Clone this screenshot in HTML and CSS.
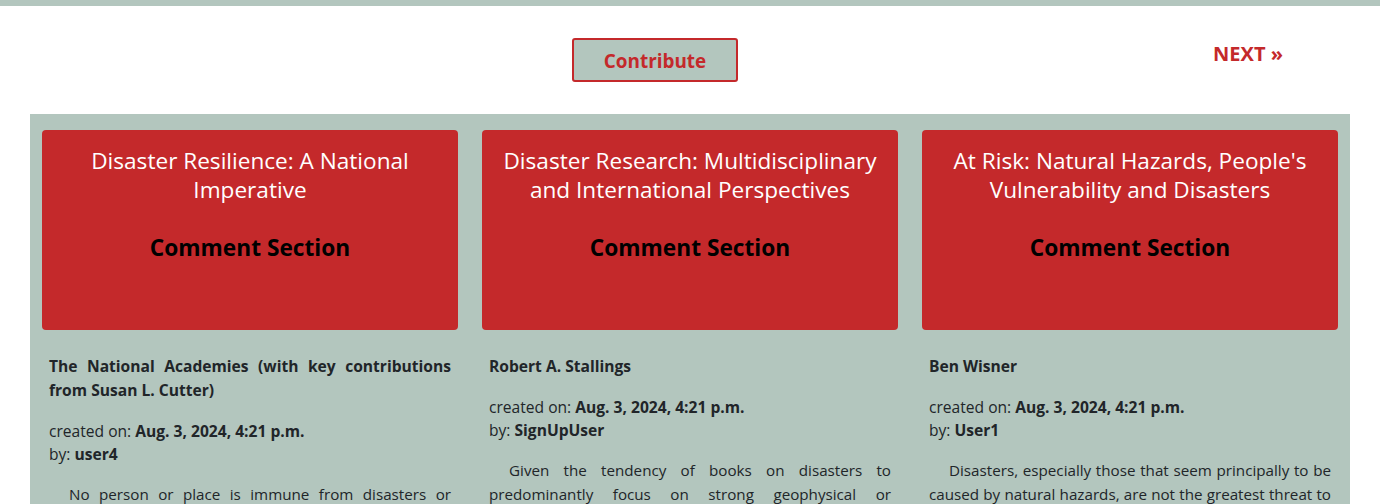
FILE: index.html
```html
<!DOCTYPE html>
<html>
<head>
<meta charset="utf-8">
<link rel="stylesheet" href="styles.css">
</head>
<body>
<div class="topbar"></div>
<div class="header">
  <a class="contribute" href="#">Contribute</a>
  <a class="next" href="#">NEXT &raquo;</a>
</div>
<div class="board">
  <div class="card">
    <div class="card-head">
      <h2 class="title">Disaster Resilience: A National Imperative</h2>
      <h3 class="comments">Comment Section</h3>
    </div>
    <div class="card-body">
      <p class="author">The National Academies (with key contributions from Susan L. Cutter)</p>
      <p class="meta">created on: <b>Aug. 3, 2024, 4:21 p.m.</b><br>by: <b>user4</b></p>
      <p class="text">No person or place is immune from disasters or disaster-related losses. Infectious disease outbreaks, acts of terrorism, social unrest, or financial disasters in addition to natural hazards can all lead to large-scale consequences for the nation and its communities.</p>
    </div>
  </div>
  <div class="card">
    <div class="card-head">
      <h2 class="title">Disaster Research: Multidisciplinary and International Perspectives</h2>
      <h3 class="comments">Comment Section</h3>
    </div>
    <div class="card-body">
      <p class="author">Robert A. Stallings</p>
      <p class="meta">created on: <b>Aug. 3, 2024, 4:21 p.m.</b><br>by: <b>SignUpUser</b></p>
      <p class="text">Given the tendency of books on disasters to predominantly focus on strong geophysical or technological events, this volume brings together research from a variety of disciplines and countries.</p>
    </div>
  </div>
  <div class="card">
    <div class="card-head">
      <h2 class="title">At Risk: Natural Hazards, People's Vulnerability and Disasters</h2>
      <h3 class="comments">Comment Section</h3>
    </div>
    <div class="card-body">
      <p class="author">Ben Wisner</p>
      <p class="meta">created on: <b>Aug. 3, 2024, 4:21 p.m.</b><br>by: <b>User1</b></p>
      <p class="text">Disasters, especially those that seem principally to be caused by natural hazards, are not the greatest threat to humanity, yet they remain a major obstacle to development in many parts of the world.</p>
    </div>
  </div>
</div>
</body>
</html>
```

FILE: styles.css
```css
* { box-sizing: border-box; }
html, body { margin: 0; padding: 0; }
body {
  font-family: "Open Sans", "Noto Sans", sans-serif;
  background: #ffffff;
  color: #212529;
  font-size: 15.6px;
  line-height: 1.5;
}
.topbar {
  height: 6px;
  background: #b3c6be;
}
.header {
  display: flex;
  align-items: center;
  height: 108px;
  padding: 0 97px 10px 572px;
}
.contribute {
  display: inline-flex;
  align-items: center;
  justify-content: center;
  width: 166px;
  height: 44px;
  margin-top: 9px;
  padding-top: 4px;
  border: 2px solid #c4292b;
  border-radius: 3px;
  background: #b3c6be;
  color: #c4292b;
  font-weight: 700;
  font-size: 18.9px;
  text-decoration: none;
}
.next {
  margin-left: auto;
  margin-bottom: 2px;
  color: #c4292b;
  font-weight: 700;
  font-size: 20px;
  text-decoration: none;
}
.board {
  margin: 0 30px;
  background: #b3c6be;
  padding: 16px 12px;
  display: grid;
  grid-template-columns: repeat(3, 1fr);
  gap: 24px;
  min-height: 400px;
}
.card-head {
  background: #c4292b;
  border-radius: 4px;
  height: 200px;
  padding: 16px 20px 0;
  text-align: center;
}
.title {
  margin: 0;
  color: #ffffff;
  font-weight: 400;
  font-size: 22.6px;
  line-height: 29px;
}
.comments {
  margin: 29px 0 0;
  color: #000000;
  font-weight: 700;
  font-size: 22.7px;
  line-height: 29px;
}
.card-body {
  padding: 24px 7px 0;
}
.card-body p { margin: 0; }
.author {
  font-weight: 700;
  text-align: justify;
  line-height: 24px;
}
.meta {
  margin-top: 18px !important;
  line-height: 23px;
}
.text {
  margin-top: 16px !important;
  text-indent: 20px;
  text-align: justify;
  line-height: 24px;
  font-size: 15.2px;
}
```
